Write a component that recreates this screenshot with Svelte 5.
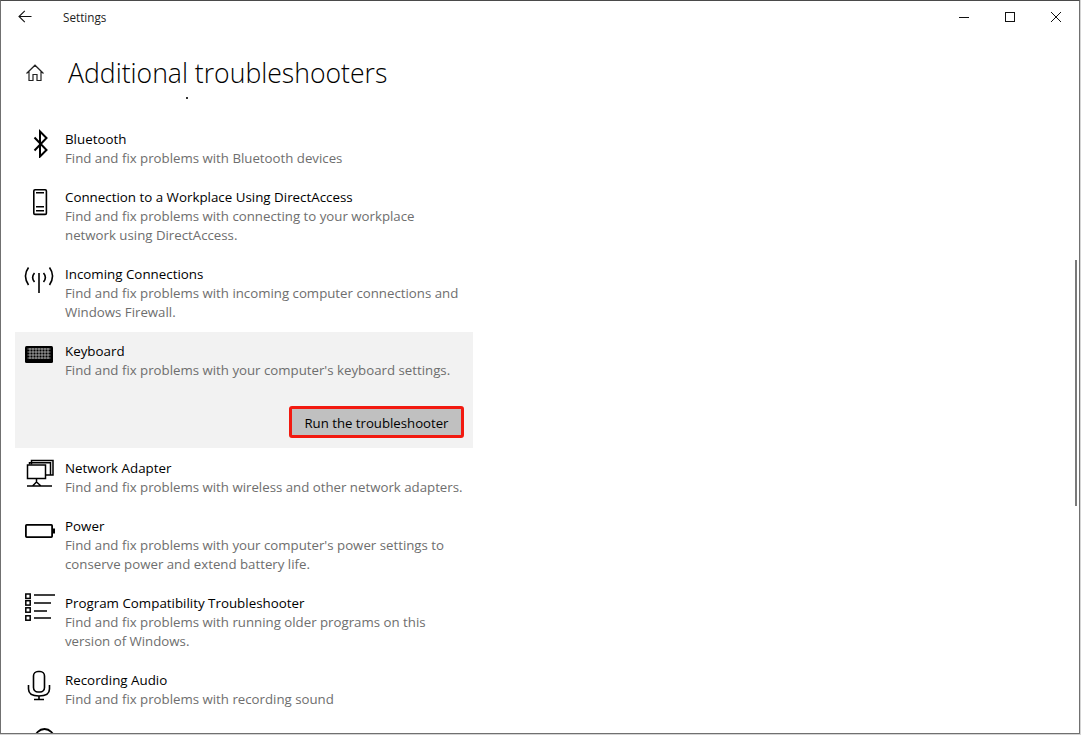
<script>
	const items = [
		{ icon: "bluetooth", title: "Bluetooth", desc: "Find and fix problems with Bluetooth devices" },
		{ icon: "phone", title: "Connection to a Workplace Using DirectAccess", desc: "Find and fix problems with connecting to your workplace network using DirectAccess." },
		{ icon: "antenna", title: "Incoming Connections", desc: "Find and fix problems with incoming computer connections and Windows Firewall." },
		{ icon: "keyboard", title: "Keyboard", desc: "Find and fix problems with your computer's keyboard settings.", open: true },
		{ icon: "network", title: "Network Adapter", desc: "Find and fix problems with wireless and other network adapters." },
		{ icon: "battery", title: "Power", desc: "Find and fix problems with your computer's power settings to conserve power and extend battery life." },
		{ icon: "list", title: "Program Compatibility Troubleshooter", desc: "Find and fix problems with running older programs on this version of Windows." },
		{ icon: "mic", title: "Recording Audio", desc: "Find and fix problems with recording sound" },
		{ icon: "search", title: "", desc: "" },
	];
</script>

<div class="window">
	<header class="titlebar">
		<svg class="back" width="16" height="14" viewBox="0 0 16 14" fill="none" stroke="#111" stroke-width="1.1">
			<path d="M2 6.500H14.500M7.800 .8L2 6.500L7.800 12.200" />
		</svg>
		<span class="apptitle">Settings</span>
		<div class="controls">
			<svg width="12" height="12" viewBox="0 0 12 12" stroke="#111"><path d="M1 6.500H11" /></svg>
			<svg width="12" height="12" viewBox="0 0 12 12" fill="none" stroke="#111"><rect x="1.500" y="1.500" width="9" height="9" /></svg>
			<svg width="12" height="12" viewBox="0 0 12 12" stroke="#111"><path d="M1 1L11 11M11 1L1 11" /></svg>
		</div>
	</header>

	<div class="heading">
		<svg width="20" height="20" viewBox="0 0 20 20" fill="none" stroke="#222" stroke-width="1.2">
			<path d="M1.500 10.500L10 2.200L18.500 10.500M4 8.500V17.500H8V11.500H12V17.500H16V8.500" />
		</svg>
		<h1>Additional troubleshooters</h1>
	</div>
	<div class="speck"></div>

	<div class="list">
		{#each items as item}
			<div class="item" class:open={item.open}>
				<div class="row">
					<div class="icon">
						{#if item.icon === "bluetooth"}
							<svg width="32" height="32" viewBox="0 0 32 32" fill="none" stroke="#000" stroke-width="2"><path d="M10.500 11.500L22.500 24L16 30.500V5.500L22.500 12L10.500 24.500" /></svg>
						{:else if item.icon === "phone"}
							<svg width="32" height="32" viewBox="0 0 32 32" fill="none" stroke="#000" stroke-width="1.6"><rect x="9.800" y="5.800" width="12.600" height="24.600" rx="1.200" /><path d="M12 8.700H20M12 22.700H20M12 26.700H20" /></svg>
						{:else if item.icon === "antenna"}
							<svg width="32" height="32" viewBox="0 0 32 32" fill="none" stroke="#000" stroke-width="1.6"><path d="M15 12V32M4.500 6.500C.5 12 .5 18 4.500 24M25.500 6.500C29.500 12 29.500 18 25.500 24M10.500 12C8 15 8 18 10.500 21M19.500 12C22 15 22 18 19.500 21" /></svg>
						{:else if item.icon === "keyboard"}
							<svg width="32" height="32" viewBox="0 0 32 32"><rect x="1" y="8" width="28" height="17" rx="1.500" fill="#000" /><path d="M3.500 11H26.500M3.500 14H26.500M3.500 17H26.500M3.500 20H26.500M6 10V21M9 10V21M12 10V21M15 10V21M18 10V21M21 10V21M24 10V21" stroke="#f2f2f2" stroke-width=".6" /></svg>
						{:else if item.icon === "network"}
							<svg class="over" width="32" height="32" viewBox="0 0 32 32" fill="none" stroke="#000" stroke-width="1.500"><path d="M7.500 9.500V5.500H29V20H26.500M5.500 9.500V7.800H26.500V20H22" /><rect x="3.500" y="10" width="18" height="13.500" /><path d="M12.500 24V27M8.500 31L12.500 27L17 31M3 31H28" /></svg>
						{:else if item.icon === "battery"}
							<svg width="32" height="32" viewBox="0 0 32 32" fill="none" stroke="#000" stroke-width="1.800"><rect x="1.900" y="11.900" width="26.200" height="12.200" rx=".8" /><rect x="29" y="15.500" width="2" height="5" fill="#000" stroke="none" /></svg>
						{:else if item.icon === "list"}
							<svg width="32" height="32" viewBox="0 0 32 32" fill="none" stroke="#000" stroke-width="1.500"><rect x="1.800" y="4" width="4.400" height="4.400" /><rect x="1.800" y="10.700" width="4.400" height="4.400" /><rect x="1.800" y="17.800" width="4.400" height="4.400" /><rect x="1.800" y="25.800" width="4.400" height="4.400" /><path d="M10 5H31M10 13H27M10 21H23M10 28H27" /></svg>
						{:else if item.icon === "mic"}
							<svg class="over" width="32" height="32" viewBox="0 0 32 32" fill="none" stroke="#000" stroke-width="1.600"><rect x="9.500" y="4.500" width="11" height="20.500" rx="4.500" /><path d="M4.500 18V22C4.500 26.500 8.500 29 15 29C21.500 29 25.500 26.500 25.500 22V18M15 29V32M10 32.500H20" /></svg>
						{:else}
							<svg width="32" height="32" viewBox="0 0 32 32" fill="none" stroke="#000" stroke-width="1.800"><circle cx="20.500" cy="13.500" r="9.500" /></svg>
						{/if}
					</div>
					<div class="text">
						<div class="title">{item.title}</div>
						<div class="desc">{item.desc}</div>
					</div>
				</div>
				{#if item.open}
					<div class="actions">
						<button>Run the troubleshooter</button>
					</div>
				{/if}
			</div>
		{/each}
	</div>

	<div class="scrollbar"></div>
</div>

<style>
	:global(body) {
		margin: 0;
		background: #d4d4d4;
	}

	.window {
		position: relative;
		box-sizing: border-box;
		width: 1080px;
		height: 734px;
		overflow: hidden;
		background: #fff;
		border: 1px solid #707070;
		border-top-color: #4a4a4a;
		font-family: "Open Sans", "Noto Sans", sans-serif;
		color: #000;
	}

	.titlebar {
		display: flex;
		align-items: center;
		height: 32px;
	}

	.back {
		margin-left: 16px;
	}

	.apptitle {
		margin-left: 30px;
		font-size: 11.700px;
		color: #222;
	}

	.controls {
		display: flex;
		gap: 34px;
		margin-left: auto;
		margin-right: 17px;
	}

	.heading {
		display: flex;
		align-items: center;
		height: 48px;
		padding: 16px 0 0 24px;
	}

	h1 {
		margin: 0 0 0 23px;
		font-size: 26.600px;
		font-weight: 300;
		line-height: 40px;
	}

	.speck {
		width: 2px;
		height: 2px;
		margin: 0 0 0 185px;
		background: #333;
	}

	.list {
		margin: 0 0 0 14px;
		padding-top: 21px;
		width: 458px;
	}

	.item {
		box-sizing: border-box;
		padding: 10px 8px 0 8px;
	}

	.item.open {
		background: #f2f2f2;
		height: 116px;
		margin-bottom: 1px;
	}

	.row {
		display: flex;
	}

	.icon {
		width: 32px;
		height: 32px;
		margin: -4px 9px 0 1px;
		flex: none;
	}

	.over {
		overflow: visible;
	}

	.text {
		min-height: 38px;
		padding-bottom: 10px;
	}

	.title {
		font-size: 13.350px;
		line-height: 19px;
	}

	.desc {
		font-size: 13.250px;
		line-height: 19px;
		color: #6e6e6e;
	}

	.actions {
		display: flex;
		justify-content: flex-end;
		margin-top: 16px;
		margin-right: 1px;
	}

	button {
		box-sizing: border-box;
		width: 175px;
		height: 32px;
		padding: 1px 0 0;
		background: #c0c0c0;
		border: 3px solid #f21a10;
		border-radius: 3px;
		font: inherit;
		font-size: 13.200px;
		color: #000;
	}

	.scrollbar {
		position: absolute;
		top: 259px;
		right: 2px;
		width: 2px;
		height: 246px;
		background: #7a7a7a;
	}
</style>
